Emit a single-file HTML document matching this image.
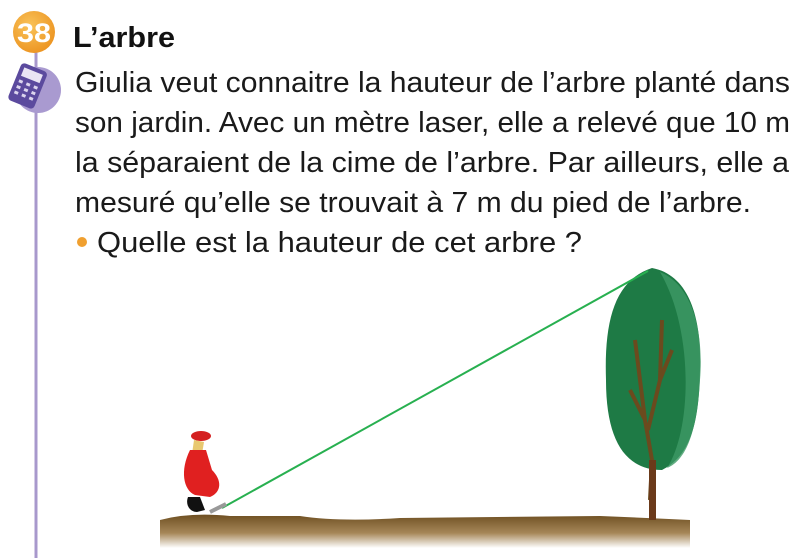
<!DOCTYPE html>
<html><head><meta charset="utf-8"><style>
html,body{margin:0;padding:0;background:#fff;width:796px;height:558px;overflow:hidden}
</style></head><body>
<svg width="796" height="558" viewBox="0 0 796 558" xmlns="http://www.w3.org/2000/svg" font-family="Liberation Sans, sans-serif">
<defs>
<radialGradient id="og" cx="0.4" cy="0.35" r="0.7"><stop offset="0" stop-color="#f9c35a"/><stop offset="1" stop-color="#ec9320"/></radialGradient>
<linearGradient id="gr" x1="0" y1="0" x2="0" y2="1"><stop offset="0" stop-color="#6e4f22"/><stop offset="0.55" stop-color="#a68758"/><stop offset="1" stop-color="#fff"/></linearGradient>
</defs>
<line x1="36" y1="50" x2="36" y2="558" stroke="#a898cc" stroke-width="3"/>
<circle cx="34" cy="32" r="21" fill="url(#og)"/>
<text x="34" y="42" font-size="27" font-weight="bold" fill="#fff" text-anchor="middle" textLength="34" lengthAdjust="spacingAndGlyphs">38</text>
<circle cx="38" cy="90" r="23" fill="#a99ad0"/>
<g transform="rotate(22 28 85)">
<rect x="14" y="66" width="28" height="40" rx="4" fill="#5b4a9e"/>
<rect x="18" y="70" width="20" height="9" fill="#e9e4f4"/>
<g fill="#dcd5ee">
<rect x="18" y="83" width="4" height="3"/><rect x="26" y="83" width="4" height="3"/><rect x="34" y="83" width="4" height="3"/>
<rect x="18" y="89" width="4" height="3"/><rect x="26" y="89" width="4" height="3"/><rect x="34" y="89" width="4" height="3"/>
<rect x="18" y="95" width="4" height="3"/><rect x="26" y="95" width="4" height="3"/><rect x="34" y="95" width="4" height="3"/>
</g></g>
<text x="73" y="47" font-size="29" font-weight="bold" fill="#111" textLength="102" lengthAdjust="spacingAndGlyphs">L’arbre</text>
<g font-size="29" fill="#1a1a1a">
<text x="75" y="92" textLength="715" lengthAdjust="spacingAndGlyphs">Giulia veut connaitre la hauteur de l’arbre planté dans</text>
<text x="75" y="132" textLength="715" lengthAdjust="spacingAndGlyphs">son jardin. Avec un mètre laser, elle a relevé que 10 m</text>
<text x="75" y="172" textLength="714" lengthAdjust="spacingAndGlyphs">la séparaient de la cime de l’arbre. Par ailleurs, elle a</text>
<text x="75" y="212" textLength="676" lengthAdjust="spacingAndGlyphs">mesuré qu’elle se trouvait à 7 m du pied de l’arbre.</text>
<text x="97" y="252" textLength="485" lengthAdjust="spacingAndGlyphs">Quelle est la hauteur de cet arbre ?</text>
</g>
<circle cx="82" cy="242" r="5" fill="#f0a030"/>
<path d="M160 520 Q190 512 230 516 L300 516 Q340 522 400 518 L600 516 Q650 518 690 520 L690 548 L160 548 Z" fill="url(#gr)"/>
<path d="M652 268 C690 275 702 320 700 370 C699 420 692 455 662 470 C625 470 606 440 606 380 C604 320 615 280 652 268 Z" fill="#1e7a45"/>
<path d="M660 272 C692 285 704 330 700 380 C697 430 687 460 667 468 C692 430 694 330 660 272 Z" fill="#3d9a65" opacity="0.8"/>
<path d="M650 500 L652 460 L645 420 L630 390 M648 430 L660 380 L662 320 M645 420 L635 340 M660 380 L672 350" stroke="#6b4a1e" stroke-width="4" fill="none"/>
<rect x="649" y="460" width="7" height="60" fill="#6b3a1a"/>
<line x1="222" y1="508" x2="648" y2="271" stroke="#28b050" stroke-width="2"/>
<ellipse cx="201" cy="436" rx="10" ry="5" fill="#d42020"/>
<path d="M194 440 L190 468 L200 466 L204 442 Z" fill="#e8c870"/>
<path d="M190 450 C180 470 183 490 195 495 L210 497 C222 492 222 480 212 470 L206 450 Z" fill="#e02020"/>
<path d="M188 497 C185 505 190 512 197 512 L205 510 L200 497 Z" fill="#111"/>
<line x1="210" y1="512" x2="226" y2="504" stroke="#999" stroke-width="4"/>
</svg>
</body></html>
